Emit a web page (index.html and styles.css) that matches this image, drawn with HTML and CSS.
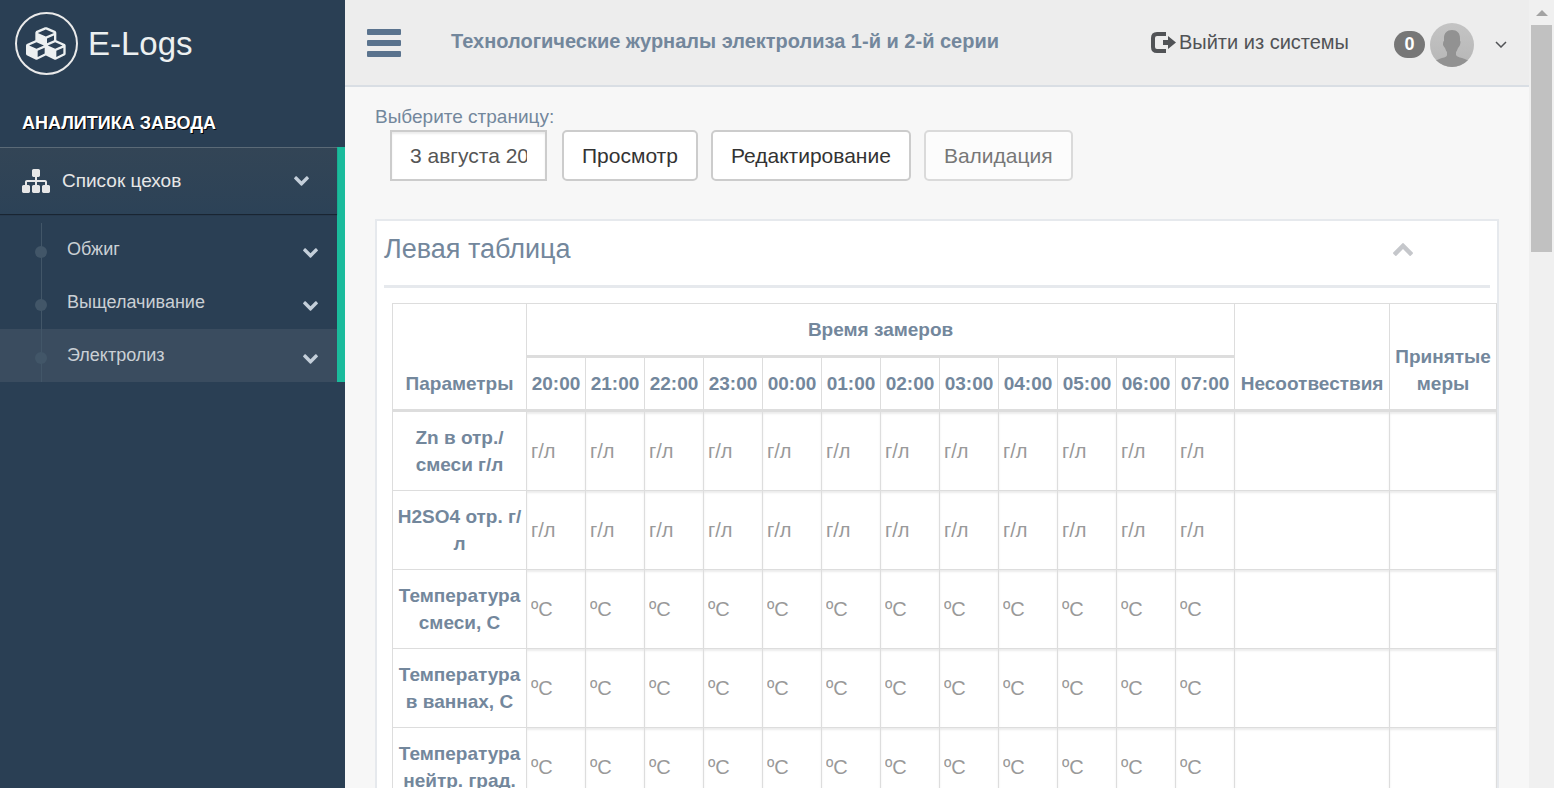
FILE: index.html
```html
<!DOCTYPE html>
<html lang="ru">
<head>
<meta charset="utf-8">
<title>E-Logs</title>
<link rel="stylesheet" href="styles.css">
</head>
<body>
<svg class="defs" aria-hidden="true">
  <symbol id="down" viewBox="90 533 1612 1035"><path d="M1683 808l-742 741q-19 19-45 19t-45-19l-742-741q-19-19-19-45.500t19-45.500l166-165q19-19 45-19t45 19l531 531 531-531q19-19 45-19t45 19l166 165q19 19 19 45.500t-19 45.500z"/></symbol>
  <symbol id="up" viewBox="90 480 1612 1035"><path d="M1683 1331l-166 165q-19 19-45 19t-45-19l-531-531-531 531q-19 19-45 19t-45-19l-166-165q-19-19-19-45.500t19-45.500l742-741q19-19 45-19t45 19l742 741q19 19 19 45.500t-19 45.500z"/></symbol>
</svg>
<div class="app">
  <aside class="sidebar">
    <a class="brand" href="#">
      <span class="brand-ring">
        <svg class="brand-icon" viewBox="0 0 2304 1792" aria-hidden="true"><path d="M640 1632l384-192v-314l-384 164v342zm-64-454l404-173-404-173-404 173zm1088 454l384-192v-314l-384 164v342zm-64-454l404-173-404-173-404 173zm-448-293l384-165v-266l-384 164v267zm-64-379l441-189-441-189-441 189zm1088 518v416q0 36-19 67t-52 47l-448 224q-25 14-57 14t-57-14l-448-224q-4-2-7-4-2 2-7 4l-448 224q-25 14-57 14t-57-14l-448-224q-33-16-52-47t-19-67v-416q0-38 21.500-70t56.500-48l434-186v-400q0-38 21.500-70t56.500-48l448-192q23-10 50-10t50 10l448 192q35 16 56.500 48t21.500 70v400l434 186q36 16 57 48t21 70z"/></svg>
      </span>
      <span>E-Logs</span>
    </a>
    <h3 class="menu-title">АНАЛИТИКА ЗАВОДА</h3>
    <nav class="menu">
      <a class="menu-head" href="#">
        <svg class="menu-icon" viewBox="0 128 1792 1536" aria-hidden="true"><path d="M1792 1248v320q0 40-28 68t-68 28h-320q-40 0-68-28t-28-68v-320q0-40 28-68t68-28h96v-192h-512v192h96q40 0 68 28t28 68v320q0 40-28 68t-68 28h-320q-40 0-68-28t-28-68v-320q0-40 28-68t68-28h96v-192h-512v192h96q40 0 68 28t28 68v320q0 40-28 68t-68 28h-320q-40 0-68-28t-28-68v-320q0-40 28-68t68-28h96v-192q0-52 38-90t90-38h512v-192h-96q-40 0-68-28t-28-68v-320q0-40 28-68t68-28h320q40 0 68 28t28 68v320q0 40-28 68t-68 28h-96v192h512q52 0 90 38t38 90v192h96q40 0 68 28t28 68z"/></svg>
        <span class="grow">Список цехов</span>
        <svg class="chevron"><use href="#down"/></svg>
      </a>
      <ul class="submenu">
        <li><a class="sub-link" href="#"><span class="grow">Обжиг</span><svg class="chevron"><use href="#down"/></svg></a></li>
        <li><a class="sub-link" href="#"><span class="grow">Выщелачивание</span><svg class="chevron"><use href="#down"/></svg></a></li>
        <li><a class="sub-link current" href="#"><span class="grow">Электролиз</span><svg class="chevron"><use href="#down"/></svg></a></li>
      </ul>
    </nav>
  </aside>
  <div class="main">
    <header class="topbar">
      <button class="toggle" type="button" aria-label="Меню">
        <svg viewBox="0 0 34 28" width="34" height="28"><rect width="34" height="6" rx="1"/><rect y="11" width="34" height="6" rx="1"/><rect y="22" width="34" height="6" rx="1"/></svg>
      </button>
      <h1 class="page-title">Технологические журналы электролиза 1-й и 2-й серии</h1>
      <a class="logout" href="#">
        <svg viewBox="0 0 25 21" width="25" height="21" aria-hidden="true"><path d="M15 2H6Q2 2 2 6v9q0 4 4 4h9" fill="none" stroke="currentColor" stroke-width="4"/><path d="M12 8h5V4l8 6.500-8 6.500v-4h-5z" fill="currentColor"/></svg>
        <span>Выйти из системы</span>
      </a>
      <button class="profile" type="button" aria-label="Профиль">
        <span class="badge">0</span>
        <svg class="avatar" viewBox="0 0 44 44" aria-hidden="true"><defs><clipPath id="round"><circle cx="22" cy="22" r="22"/></clipPath><linearGradient id="shade" x1="0" y1="0" x2="0" y2="1"><stop offset="0" stop-color="#c4c4c4"/><stop offset="1" stop-color="#b6b6b6"/></linearGradient></defs><g clip-path="url(#round)"><path fill="url(#shade)" d="M0 0h44v44H0z"/><path fill="#929292" d="M22 7c5 0 8 3 8 8v3q1 0 0 4-1 2-2 3-1 3-2 4v3q1 2 6 3 6 2 8 4v5H4v-5q2-2 8-4 5-1 5-3v-3q-1-1-2-4-1-1-2-3 0-4 1-4v-3c0-5 3-8 8-8z"/></g></svg>
        <svg class="angle" viewBox="0 0 12 7" width="12" height="7" aria-hidden="true"><path d="M1 1l5 5 5-5" fill="none" stroke="currentColor" stroke-width="1.500"/></svg>
      </button>
    </header>
    <main class="content">
      <label class="field-label" for="page-date">Выберите страницу:</label>
      <div class="controls">
        <input class="date" id="page-date" type="text" value="3 августа 20">
        <div class="buttons">
          <button class="btn" type="button">Просмотр</button>
          <button class="btn" type="button">Редактирование</button>
          <button class="btn" type="button" disabled>Валидация</button>
        </div>
      </div>
      <section class="panel">
        <div class="panel-head">
          <h2 class="panel-title">Левая таблица</h2>
          <button class="collapse" type="button" aria-label="Свернуть"><svg width="20" height="13"><use href="#up"/></svg></button>
        </div>
        <div class="panel-body">
          <table class="log">
            <colgroup><col class="col-name"><col class="col-time" span="12"><col class="col-issue"><col class="col-action"></colgroup>
            <thead>
              <tr><th rowspan="2">Параметры</th><th colspan="12">Время замеров</th><th rowspan="2">Несоотвествия</th><th rowspan="2">Принятые меры</th></tr>
              <tr id="hours"></tr>
            </thead>
            <tbody id="rows"></tbody>
          </table>
        </div>
      </section>
    </main>
  </div>
  <div class="scrollbar" aria-hidden="true">
    <svg class="arrow-up" viewBox="0 0 12 6" width="12" height="6"><path d="M0 6l6-6 6 6z"/></svg>
    <div class="track"><div class="thumb"></div></div>
    <svg class="arrow-down" viewBox="0 0 12 6" width="12" height="6"><path d="M0 0l6 6 6-6z"/></svg>
  </div>
</div>
<script src="app.js"></script>
</body>
</html>
```
FILE: styles.css
```css
* { box-sizing: border-box; }

body {
  margin: 0;
  color: #73879c;
  background: #f7f7f7;
  font: 20px/27px "Liberation Sans", Arial, sans-serif;
}

a { color: inherit; text-decoration: none; }
h1, h2, h3, ul { margin: 0; padding: 0; }
ul { list-style: none; }
button, input { font: inherit; color: inherit; margin: 0; }
button { padding: 0; border: 0; background: none; }
svg { display: block; flex: none; }
.defs { display: none; }
.grow { flex: 1; }

.app {
  display: grid;
  grid-template-columns: 345px minmax(0, 1fr) 25px;
  height: 100vh;
  overflow: hidden;
}

/* Sidebar */
.sidebar { background: #2a3f54; }

.brand {
  display: flex;
  align-items: center;
  gap: 10px;
  height: 87px;
  padding-left: 15px;
  color: #ecf0f1;
  font-size: 33px;
}
.brand-ring {
  display: grid;
  place-items: center;
  width: 63px;
  height: 63px;
  border: 2px solid #eaeaea;
  border-radius: 50%;
}
.brand-icon { width: 42px; height: 33px; fill: #ecf0f1; }

.menu-title {
  padding: 23px 22px 10px;
  color: #fff;
  font-size: 18px;
  text-shadow: 1px 1px #000;
}

.menu { border-right: 8px solid #1abb9c; }
.menu-head {
  display: flex;
  align-items: center;
  gap: 12px;
  height: 67px;
  padding: 0 28px 0 22px;
  color: #e7e7e7;
  background: linear-gradient(#334556, #2c4257);
  box-shadow: 0 1px 1px rgba(0, 0, 0, .4), inset 0 1px rgba(255, 255, 255, .2);
  font-size: 19px;
}
.menu-icon { width: 28px; height: 24px; fill: #e7e7e7; }
.chevron { width: 15px; height: 10px; fill: #c4cfda; }

.submenu { padding-top: 9px; font-size: 18px; }
.submenu li { position: relative; }
.submenu li::before {
  content: "";
  position: absolute;
  left: 41px;
  top: 0;
  bottom: 0;
  width: 1px;
  background: #425668;
}
.submenu li::after {
  content: "";
  position: absolute;
  left: 35px;
  top: 23px;
  width: 12px;
  height: 12px;
  border-radius: 50%;
  background: #425668;
}
.sub-link {
  display: flex;
  align-items: center;
  height: 53px;
  padding: 0 19px 0 67px;
  color: #cad0d5;
}
.sub-link .chevron { margin-top: 6px; }
.current { background: #3a4c5f; }

/* Top bar */
.topbar {
  display: flex;
  align-items: center;
  height: 87px;
  padding: 0 22px;
  background: #ededed;
  border-bottom: 2px solid #d9dee4;
  color: #515356;
}
.toggle { fill: #5a738e; }
.page-title {
  flex: 1;
  padding: 0 0 3px 50px;
  color: #73879c;
  font-size: 20px;
}
.logout { display: flex; align-items: center; gap: 3px; }
.profile { display: flex; align-items: center; gap: 5px; margin: 4px 0 0 45px; }
.badge {
  min-width: 31px;
  border-radius: 15px;
  background: #777;
  color: #fff;
  font-size: 18px;
  font-weight: bold;
  text-align: center;
}
.avatar { width: 44px; height: 44px; }
.angle { margin-left: 16px; }

/* Content */
.content { padding: 16px 30px 0; }
.field-label { display: block; font-size: 19px; }
.controls { display: flex; gap: 15px; padding-left: 15px; }
.buttons { display: flex; gap: 13px; }
.date {
  width: 157px;
  height: 51px;
  padding: 0 18px;
  border: 2px solid #ccc;
  background: #fff;
  box-shadow: inset 0 2px 2px rgba(0, 0, 0, .08);
  color: #555;
  font-size: 21px;
}
.btn {
  height: 51px;
  padding: 0 18px;
  border: 2px solid #ccc;
  border-radius: 5px;
  background: #fff;
  color: #333;
  font-size: 21px;
}
.btn:disabled { opacity: .65; }

.panel {
  margin-top: 38px;
  padding: 0 7px 15px;
  border: 2px solid #e6e9ed;
  background: #fff;
}
.panel-head {
  display: flex;
  align-items: center;
  justify-content: space-between;
  height: 67px;
  padding: 0 77px 8px 0;
  border-bottom: 3px solid #e6e9ed;
}
.panel-title { font-size: 27px; font-weight: normal; }
.collapse { fill: #c5c7cb; }
.panel-body { margin-right: -7px; padding: 15px 0 0 8px; }

/* Log table */
.log {
  width: 100%;
  table-layout: fixed;
  border-collapse: collapse;
}
.col-name { width: 134px; }
.col-time { width: 59px; }
.col-issue { width: 155px; }
.log th, .log td { border: 1px solid #ddd; padding: 0; }
.log th { padding: 12px 0; font-size: 19px; vertical-align: bottom; }
.log thead th { border-bottom-width: 3px; }
.log td { height: 79px; }
.cell {
  display: block;
  width: 100%;
  height: 78px;
  padding: 0 4px;
  border: 0;
  background: #fff;
  box-shadow: inset 0 2px 2px rgba(0, 0, 0, .08);
  font-size: 20px;
}
.cell::placeholder { color: #999; opacity: 1; }

/* Scroll bar */
.scrollbar {
  display: flex;
  flex-direction: column;
  align-items: center;
  justify-content: space-between;
  padding: 10px 0;
  background: #f0f0f0;
}
.arrow-up { fill: #a3a3a3; }
.arrow-down { fill: #505050; }
.track { flex: 1; padding: 9px 0; }
.thumb { width: 21px; height: 227px; background: #c1c1c1; }
```
FILE: app.js
```js
const hours = ["20:00", "21:00", "22:00", "23:00", "00:00", "01:00", "02:00", "03:00", "04:00", "05:00", "06:00", "07:00"];
const params = [
  ["Zn в отр./ смеси г/л", "г/л"],
  ["H2SO4 отр. г/л", "г/л"],
  ["Температура смеси, С", "ºC"],
  ["Температура в ваннах, С", "ºC"],
  ["Температура нейтр. град.", "ºC"]
];

document.getElementById("hours").innerHTML = hours.map(h => `<th>${h}</th>`).join("");

const cell = (label, unit) =>
  `<td><input class="cell" type="text" aria-label="${label}" placeholder="${unit}"></td>`;

document.getElementById("rows").innerHTML = params.map(([name, unit]) =>
  `<tr><th>${name}</th>` +
  hours.map(h => cell(`${name}, ${h}`, unit)).join("") +
  cell(`${name}, несоответствия`, "") +
  cell(`${name}, принятые меры`, "") +
  "</tr>"
).join("");
```
